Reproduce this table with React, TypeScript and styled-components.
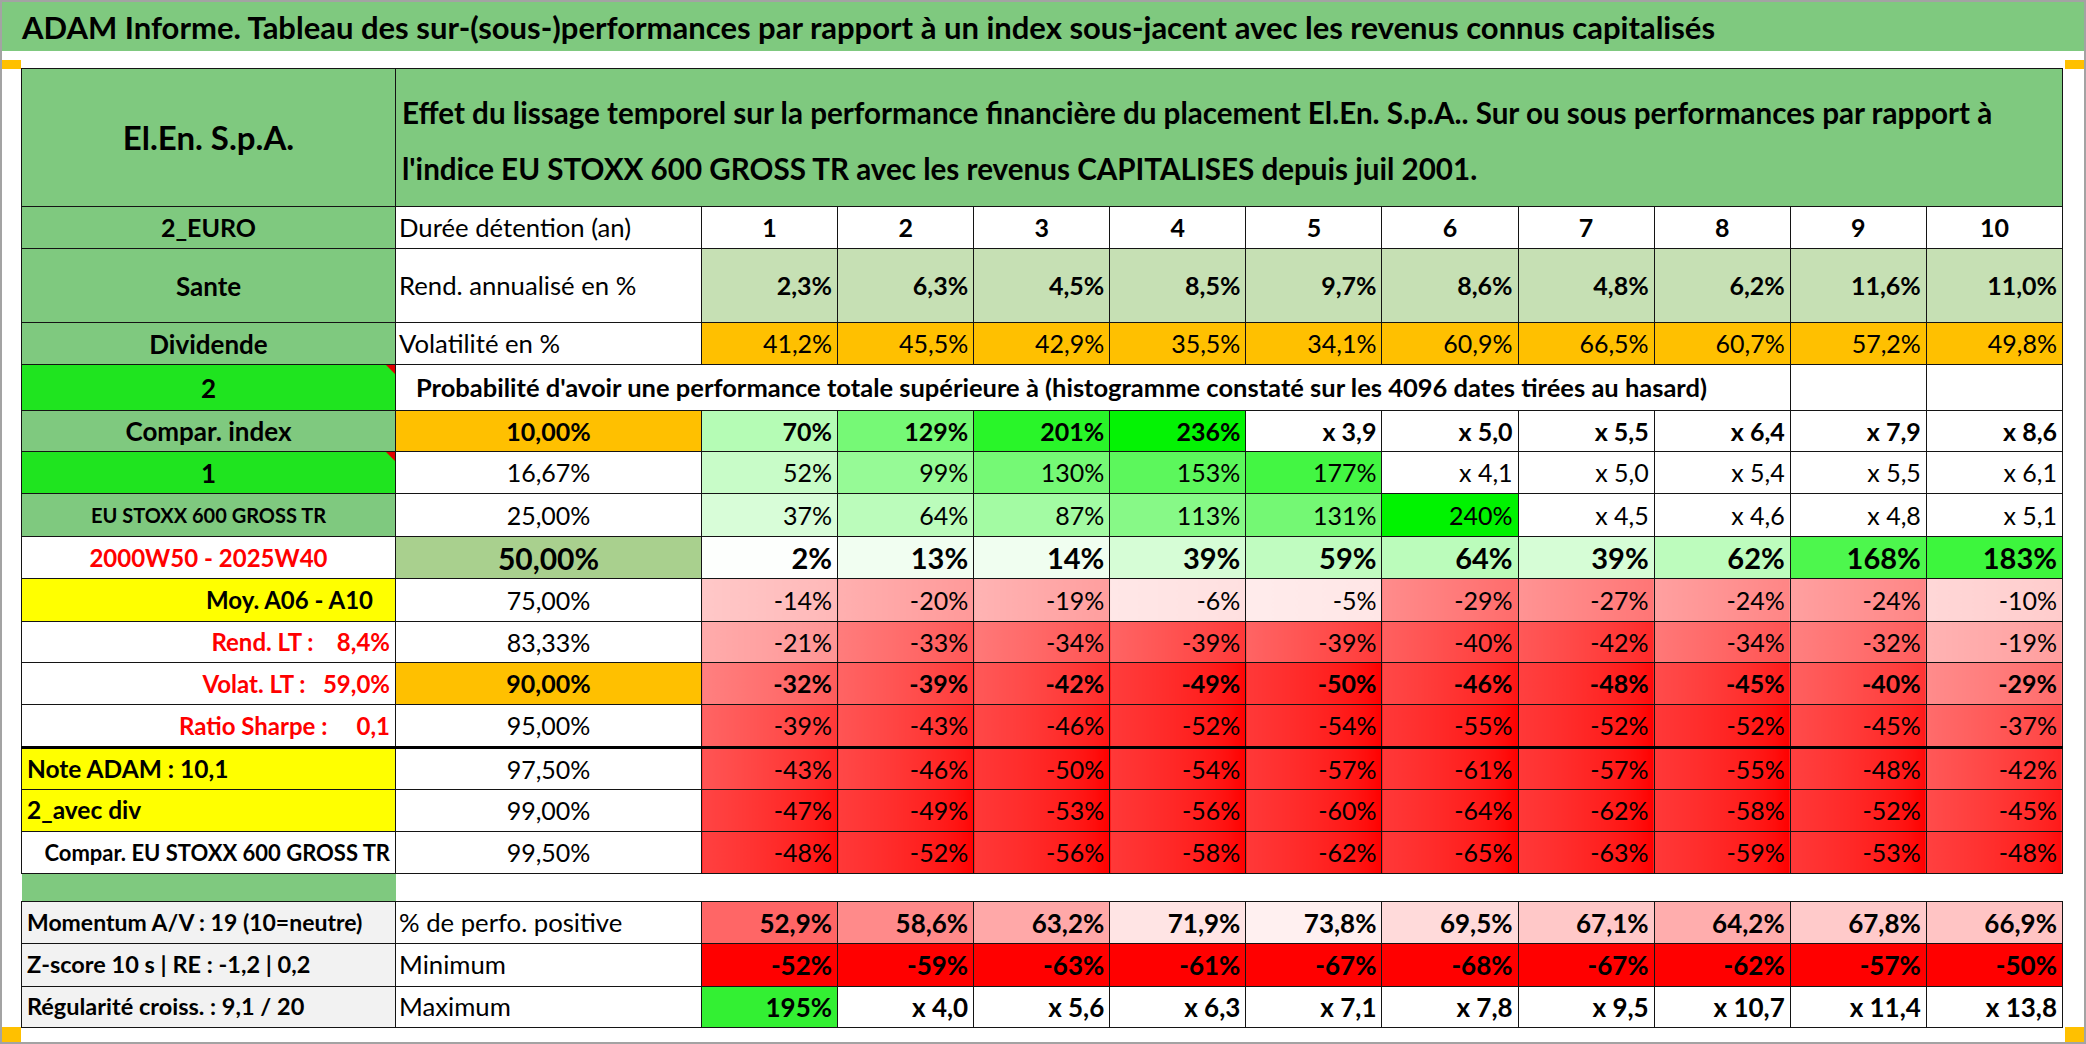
import styled, { createGlobalStyle } from "styled-components";

const GlobalStyle = createGlobalStyle`
  html, body {
    margin: 0;
    padding: 0;
    background: #ffffff;
  }
  body {
    font-family: Lato, "Open Sans", sans-serif;
    color: #000;
  }
`;

const GREEN = "#7fc97f";
const ORANGE = "#ffc000";
const YELLOW = "#ffff00";
const LIGHT_GREEN = "#c6e0b4";
const MID_GREEN = "#a9d08e";
const BRIGHT = "#1fe41f";
const GREY = "#f2f2f2";
const RED_TXT = "#ff0000";

const Page = styled.div`
  position: relative;
  width: 2086px;
  height: 1044px;
  box-sizing: border-box;
  border: 2px solid #a3a3a3;
  background: #fff;
  overflow: hidden;
`;

const TitleBar = styled.div`
  height: 49px;
  background: ${GREEN};
  display: flex;
  align-items: center;
  padding-left: 20px;
  font-size: 31px;
  font-weight: 700;
  white-space: nowrap;
`;

const Sheet = styled.div`
  padding: 17px 21px 0 19px;
`;

const Marker = styled.div<{ $left?: boolean; $top: number; $h: number }>`
  position: absolute;
  top: ${(p) => p.$top}px;
  ${(p) => (p.$left ? "left: 0;" : "right: 0;")}
  width: 19px;
  height: ${(p) => p.$h}px;
  background: ${ORANGE};
`;

const Table = styled.table`
  border-collapse: collapse;
  table-layout: fixed;
  width: 2042px;
`;

const Row = styled.tr<{ $h: number; $thick?: boolean }>`
  height: ${(p) => p.$h}px;
  ${(p) => p.$thick && "& > td { border-top: 3px solid #000; }"}
`;

type CellProps = {
  $bg?: string;
  $align?: "left" | "center" | "right";
  $bold?: boolean;
  $size?: number;
  $color?: string;
  $pad?: number;
  $grad?: boolean;
  $flag?: boolean;
  $open?: boolean;
};

const Cell = styled.td<CellProps>`
  position: relative;
  box-sizing: border-box;
  border: 1px solid #141414;
  ${(p) => p.$open && "border-left: none; border-right: none;"}
  background: ${(p) =>
    p.$grad && p.$bg
      ? `linear-gradient(90deg, color-mix(in srgb, ${p.$bg} 78%, #ffffff) 0%, ${p.$bg} 100%)`
      : p.$bg ?? "#ffffff"};
  text-align: ${(p) => p.$align ?? "right"};
  font-weight: ${(p) => (p.$bold ? 700 : 400)};
  font-size: ${(p) => p.$size ?? 25}px;
  color: ${(p) => p.$color ?? "#000"};
  padding: 0 ${(p) => p.$pad ?? 5}px;
  line-height: 1;
  white-space: nowrap;
  overflow: hidden;
  vertical-align: middle;

  ${(p) =>
    p.$flag &&
    `&::after {
      content: "";
      position: absolute;
      top: 0;
      right: 0;
      border-top: 9px solid #e00000;
      border-left: 9px solid transparent;
    }`}
`;

/* left-hand labels of column B ("Durée détention (an)", "Minimum", ...) */
const Label = styled(Cell).attrs({ $align: "left" as const, $pad: 3, $size: 25.7 })``;

const HeaderText = styled.div`
  font-size: 29.6px;
  font-weight: 700;
  line-height: 56px;
  white-space: nowrap;
  padding-top: 6px;
`;

const heat = (v: string): string => {
  if (v.startsWith("x")) return "#ffffff";
  const n = parseFloat(v.replace(",", "."));
  if (n >= 0) {
    const t = Math.min(n / 240, 1);
    const c = Math.round(255 * (1 - t));
    return `rgb(${c}, ${Math.round(255 - 12 * t)}, ${c})`;
  }
  const t = Math.min(-n / 50, 1);
  const c = Math.round(255 * (1 - t));
  return `rgb(255, ${c}, ${c})`;
};

type ProbRow = {
  label: string;
  labelBg: string;
  labelAlign: "left" | "center" | "right";
  labelColor?: string;
  labelSize?: number;
  labelPad?: number;
  flag?: boolean;
  pct: string;
  pctBg?: string;
  bold?: boolean;
  big?: boolean;
  vals: string[];
  h: number;
  thickTop?: boolean;
};

const probRows: ProbRow[] = [
  { label: "Compar. index", labelBg: GREEN, labelAlign: "center", labelSize: 26, pct: "10,00%", pctBg: ORANGE, bold: true, h: 41,
    vals: ["70%", "129%", "201%", "236%", "x 3,9", "x 5,0", "x 5,5", "x 6,4", "x 7,9", "x 8,6"] },
  { label: "1", labelBg: BRIGHT, labelAlign: "center", labelSize: 26, flag: true, pct: "16,67%", h: 42,
    vals: ["52%", "99%", "130%", "153%", "177%", "x 4,1", "x 5,0", "x 5,4", "x 5,5", "x 6,1"] },
  { label: "EU STOXX 600 GROSS TR", labelBg: GREEN, labelAlign: "center", labelSize: 20, pct: "25,00%", h: 43,
    vals: ["37%", "64%", "87%", "113%", "131%", "240%", "x 4,5", "x 4,6", "x 4,8", "x 5,1"] },
  { label: "2000W50 - 2025W40", labelBg: "#ffffff", labelAlign: "center", labelColor: RED_TXT, labelSize: 24, pct: "50,00%", pctBg: MID_GREEN, bold: true, big: true, h: 42,
    vals: ["2%", "13%", "14%", "39%", "59%", "64%", "39%", "62%", "168%", "183%"] },
  { label: "Moy. A06 - A10", labelBg: YELLOW, labelAlign: "right", labelSize: 24, labelPad: 22, pct: "75,00%", h: 43,
    vals: ["-14%", "-20%", "-19%", "-6%", "-5%", "-29%", "-27%", "-24%", "-24%", "-10%"] },
  { label: "Rend. LT :\u00a0\u00a0\u00a0 8,4%", labelBg: "#ffffff", labelAlign: "right", labelColor: RED_TXT, labelSize: 24, pct: "83,33%", h: 41,
    vals: ["-21%", "-33%", "-34%", "-39%", "-39%", "-40%", "-42%", "-34%", "-32%", "-19%"] },
  { label: "Volat. LT :\u00a0\u00a0 59,0%", labelBg: "#ffffff", labelAlign: "right", labelColor: RED_TXT, labelSize: 24, pct: "90,00%", pctBg: ORANGE, bold: true, h: 42,
    vals: ["-32%", "-39%", "-42%", "-49%", "-50%", "-46%", "-48%", "-45%", "-40%", "-29%"] },
  { label: "Ratio Sharpe :\u00a0\u00a0\u00a0\u00a0 0,1", labelBg: "#ffffff", labelAlign: "right", labelColor: RED_TXT, labelSize: 24, pct: "95,00%", h: 43,
    vals: ["-39%", "-43%", "-46%", "-52%", "-54%", "-55%", "-52%", "-52%", "-45%", "-37%"] },
  { label: "Note ADAM : 10,1", labelBg: YELLOW, labelAlign: "left", labelSize: 24.5, pct: "97,50%", h: 42, thickTop: true,
    vals: ["-43%", "-46%", "-50%", "-54%", "-57%", "-61%", "-57%", "-55%", "-48%", "-42%"] },
  { label: "2_avec div", labelBg: YELLOW, labelAlign: "left", labelSize: 24.5, pct: "99,00%", h: 42,
    vals: ["-47%", "-49%", "-53%", "-56%", "-60%", "-64%", "-62%", "-58%", "-52%", "-45%"] },
  { label: "Compar. EU STOXX 600 GROSS TR", labelBg: "#ffffff", labelAlign: "right", labelSize: 22, pct: "99,50%", h: 42,
    vals: ["-48%", "-52%", "-56%", "-58%", "-62%", "-65%", "-63%", "-59%", "-53%", "-48%"] },
];

const years = ["1", "2", "3", "4", "5", "6", "7", "8", "9", "10"];
const rend = ["2,3%", "6,3%", "4,5%", "8,5%", "9,7%", "8,6%", "4,8%", "6,2%", "11,6%", "11,0%"];
const vola = ["41,2%", "45,5%", "42,9%", "35,5%", "34,1%", "60,9%", "66,5%", "60,7%", "57,2%", "49,8%"];

const positive = ["52,9%", "58,6%", "63,2%", "71,9%", "73,8%", "69,5%", "67,1%", "64,2%", "67,8%", "66,9%"];
const positiveBg = ["#ff6666", "#ff8a8a", "#ffa8a8", "#ffe4e4", "#fff0f0", "#ffdada", "#ffc8c8", "#ffadad", "#ffcaca", "#ffc4c4"];
const minimum = ["-52%", "-59%", "-63%", "-61%", "-67%", "-68%", "-67%", "-62%", "-57%", "-50%"];
const maximum = ["195%", "x 4,0", "x 5,6", "x 6,3", "x 7,1", "x 7,8", "x 9,5", "x 10,7", "x 11,4", "x 13,8"];

const App = () => {
  return (
    <>
      <GlobalStyle />
      <Page>
        <TitleBar>
          ADAM Informe. Tableau des sur-(sous-)performances par rapport à un index sous-jacent avec les revenus connus capitalisés
        </TitleBar>
        <Marker $left $top={58} $h={9} />
        <Marker $top={58} $h={9} />
        <Marker $left $top={1025} $h={15} />
        <Marker $top={1025} $h={15} />
        <Sheet>
          <Table>
            <colgroup>
              <col style={{ width: 374 }} />
              <col style={{ width: 306 }} />
              {years.map((y) => (
                <col key={y} />
              ))}
            </colgroup>
            <tbody>
              <Row $h={138}>
                <Cell $bg={GREEN} $align="center" $bold $size={33}>
                  El.En. S.p.A.
                </Cell>
                <Cell $bg={GREEN} $align="left" colSpan={11} $pad={6}>
                  <HeaderText>
                    Effet du lissage temporel sur la performance financière du placement El.En. S.p.A.. Sur ou sous performances par rapport à
                    <br />
                    l'indice EU STOXX 600 GROSS TR avec les revenus CAPITALISES depuis juil 2001.
                  </HeaderText>
                </Cell>
              </Row>
              <Row $h={42}>
                <Cell $bg={GREEN} $align="center" $bold>2_EURO</Cell>
                <Label>Durée détention (an)</Label>
                {years.map((y) => (
                  <Cell key={y} $align="center" $bold>{y}</Cell>
                ))}
              </Row>
              <Row $h={74}>
                <Cell $bg={GREEN} $align="center" $bold $size={26}>Sante</Cell>
                <Label>Rend. annualisé en %</Label>
                {rend.map((v, i) => (
                  <Cell key={i} $bg={LIGHT_GREEN} $bold>{v}</Cell>
                ))}
              </Row>
              <Row $h={42}>
                <Cell $bg={GREEN} $align="center" $bold $size={26}>Dividende</Cell>
                <Label>Volatilité en %</Label>
                {vola.map((v, i) => (
                  <Cell key={i} $bg={ORANGE}>{v}</Cell>
                ))}
              </Row>
              <Row $h={46}>
                <Cell $bg={BRIGHT} $align="center" $bold $size={26} $flag>2</Cell>
                <Cell $align="left" colSpan={9} $bold $size={25.5} $pad={20}>
                  Probabilité d'avoir une performance totale supérieure à (histogramme constaté sur les 4096 dates tirées au hasard)
                </Cell>
                <Cell />
                <Cell />
              </Row>
              {probRows.map((r) => (
                <Row key={r.pct} $h={r.h} $thick={r.thickTop}>
                  <Cell
                    $bg={r.labelBg}
                    $align={r.labelAlign}
                    $color={r.labelColor}
                    $size={r.labelSize}
                    $pad={r.labelPad ?? 5}
                    $flag={r.flag}
                    $bold
                  >
                    {r.label}
                  </Cell>
                  <Cell $bg={r.pctBg} $align="center" $bold={r.bold} $size={r.big ? 30 : 25}>
                    {r.pct}
                  </Cell>
                  {r.vals.map((v, i) => (
                    <Cell
                      key={i}
                      $bg={heat(v)}
                      $grad={v.startsWith("-")}
                      $bold={r.bold}
                      $size={r.big ? 29 : 25}
                    >
                      {v}
                    </Cell>
                  ))}
                </Row>
              ))}
              <Row $h={28}>
                <Cell $bg={GREEN} $open />
                <Cell $open colSpan={11} />
              </Row>
              <Row $h={42}>
                <Cell $bg={GREY} $align="left" $bold $size={23}>Momentum A/V : 19 (10=neutre)</Cell>
                <Label>% de perfo. positive</Label>
                {positive.map((v, i) => (
                  <Cell key={i} $bg={positiveBg[i]} $bold $size={26}>{v}</Cell>
                ))}
              </Row>
              <Row $h={43}>
                <Cell $bg={GREY} $align="left" $bold $size={23.5}>Z-score 10 s | RE : -1,2 | 0,2</Cell>
                <Label>Minimum</Label>
                {minimum.map((v, i) => (
                  <Cell key={i} $bg="#ff0000" $bold $size={26}>{v}</Cell>
                ))}
              </Row>
              <Row $h={41}>
                <Cell $bg={GREY} $align="left" $bold $size={23.5}>Régularité croiss. : 9,1 / 20</Cell>
                <Label>Maximum</Label>
                {maximum.map((v, i) => (
                  <Cell key={i} $bg={i === 0 ? "#33f033" : "#ffffff"} $bold $size={26}>{v}</Cell>
                ))}
              </Row>
            </tbody>
          </Table>
        </Sheet>
      </Page>
    </>
  );
};

export default App;
